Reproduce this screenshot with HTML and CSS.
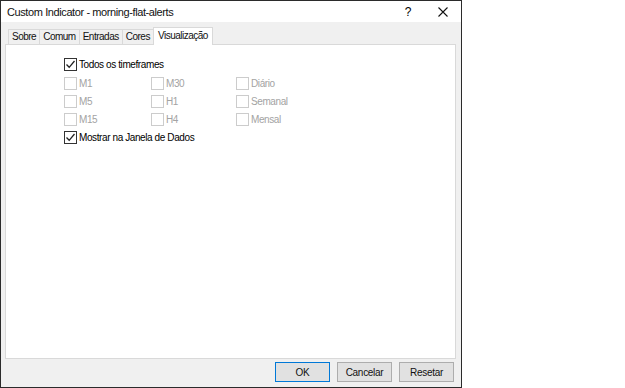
FILE: index.html
```html
<!DOCTYPE html>
<html lang="pt">
<head>
    <meta charset="UTF-8">
    <title>Custom Indicator - morning-flat-alerts</title>
    <link rel="stylesheet" href="styles.css">
</head>
<body>
    <div class="window">
        <div class="titlebar">
            <span class="title">Custom Indicator - morning-flat-alerts</span>
            <span class="help">?</span>
            <span class="close">
                <svg width="10" height="10" viewBox="0 0 10 10"><path d="M0.5 0.5 L9.5 9.5 M9.5 0.5 L0.5 9.5" stroke="#111" stroke-width="1.1" fill="none"/></svg>
            </span>
        </div>

        <div class="client">
            <!-- abas -->
            <div class="tabs">
                <div class="tab">Sobre</div>
                <div class="tab">Comum</div>
                <div class="tab">Entradas</div>
                <div class="tab">Cores</div>
                <div class="tab selected">Visualização</div>
            </div>

            <div class="panel">
                <div class="grid">
                    <label class="check full"><span class="box on"><svg width="11" height="11" viewBox="0 0 11 11"><path d="M1.5 5.5 L4.2 8.3 L9.5 2" stroke="#222" stroke-width="1.3" fill="none"/></svg></span>Todos os timeframes</label>

                    <label class="check off"><span class="box"></span>M1</label>
                    <label class="check off"><span class="box"></span>M30</label>
                    <label class="check off"><span class="box"></span>Diário</label>

                    <label class="check off"><span class="box"></span>M5</label>
                    <label class="check off"><span class="box"></span>H1</label>
                    <label class="check off"><span class="box"></span>Semanal</label>

                    <label class="check off"><span class="box"></span>M15</label>
                    <label class="check off"><span class="box"></span>H4</label>
                    <label class="check off"><span class="box"></span>Mensal</label>

                    <label class="check full"><span class="box on"><svg width="11" height="11" viewBox="0 0 11 11"><path d="M1.5 5.5 L4.2 8.3 L9.5 2" stroke="#222" stroke-width="1.3" fill="none"/></svg></span>Mostrar na Janela de Dados</label>
                </div>
            </div>

            <div class="buttons">
                <button class="btn default">OK</button>
                <button class="btn">Cancelar</button>
                <button class="btn">Resetar</button>
            </div>
        </div>
    </div>
</body>
</html>
```

FILE: styles.css
```css
body {
    margin: 0;
    background: white;
    font-family: "Liberation Sans", Arial, sans-serif;
    font-size: 10px;
    letter-spacing: -0.4px;
    color: #000;
}

.window {
    width: 462px;
    height: 388px;
    box-sizing: border-box;
    border: 1px solid #2b2b2b;
    display: flex;
    flex-direction: column;
    background: #f0f0f0;
}

.titlebar {
    height: 22px;
    background: white;
    display: flex;
    align-items: center;
    padding-left: 6px;
}
.title { flex: 1; font-size: 11px; letter-spacing: -0.4px; color: #111; }
.help { width: 20px; text-align: center; font-size: 12px; margin-right: 15px; }
.close { width: 20px; display: flex; justify-content: center; margin-right: 8px; }

.client {
    flex: 1;
    display: flex;
    flex-direction: column;
    padding: 5px 5px 5px 4px;
}

.tabs { display: flex; height: 17px; align-items: flex-end; padding-left: 3px; }
.tab {
    height: 14px;
    line-height: 14px;
    padding: 0 3px;
    border: 1px solid #d9d9d9;
    border-bottom: none;
    margin-right: -1px;
    color: #111;
    letter-spacing: -0.5px;
}
.tab.selected {
    height: 17px;
    line-height: 15px;
    background: white;
    position: relative;
    z-index: 1;
    margin-bottom: -1px;
    padding: 0 4px;
}

.panel {
    height: 313px;
    background: white;
    border: 1px solid #d9d9d9;
}

.grid {
    display: grid;
    grid-template-columns: 87px 85px 120px;
    grid-template-rows: 19px 18px 18px 18px 19px;
    padding: 10px 0 0 58px;
}

.check { display: flex; align-items: center; gap: 2px; }
.check.full { grid-column: 1 / 4; }
.check.off { color: #a3a3a3; }

.box {
    width: 11px;
    height: 11px;
    border: 1px solid #cccccc;
    background: white;
    display: flex;
    align-items: center;
    justify-content: center;
}
.box.on { border-color: #333; }

.buttons { display: flex; justify-content: flex-end; gap: 7px; margin-top: 3px; padding-right: 2px; }
.btn {
    width: 55px;
    height: 20px;
    font-family: "Liberation Sans", Arial, sans-serif;
    font-size: 10px;
    letter-spacing: -0.3px;
    background: #e1e1e1;
    border: 1px solid #adadad;
    padding: 0;
    color: #111;
}
.btn.default { border: 1px solid #0078d7; }
```
